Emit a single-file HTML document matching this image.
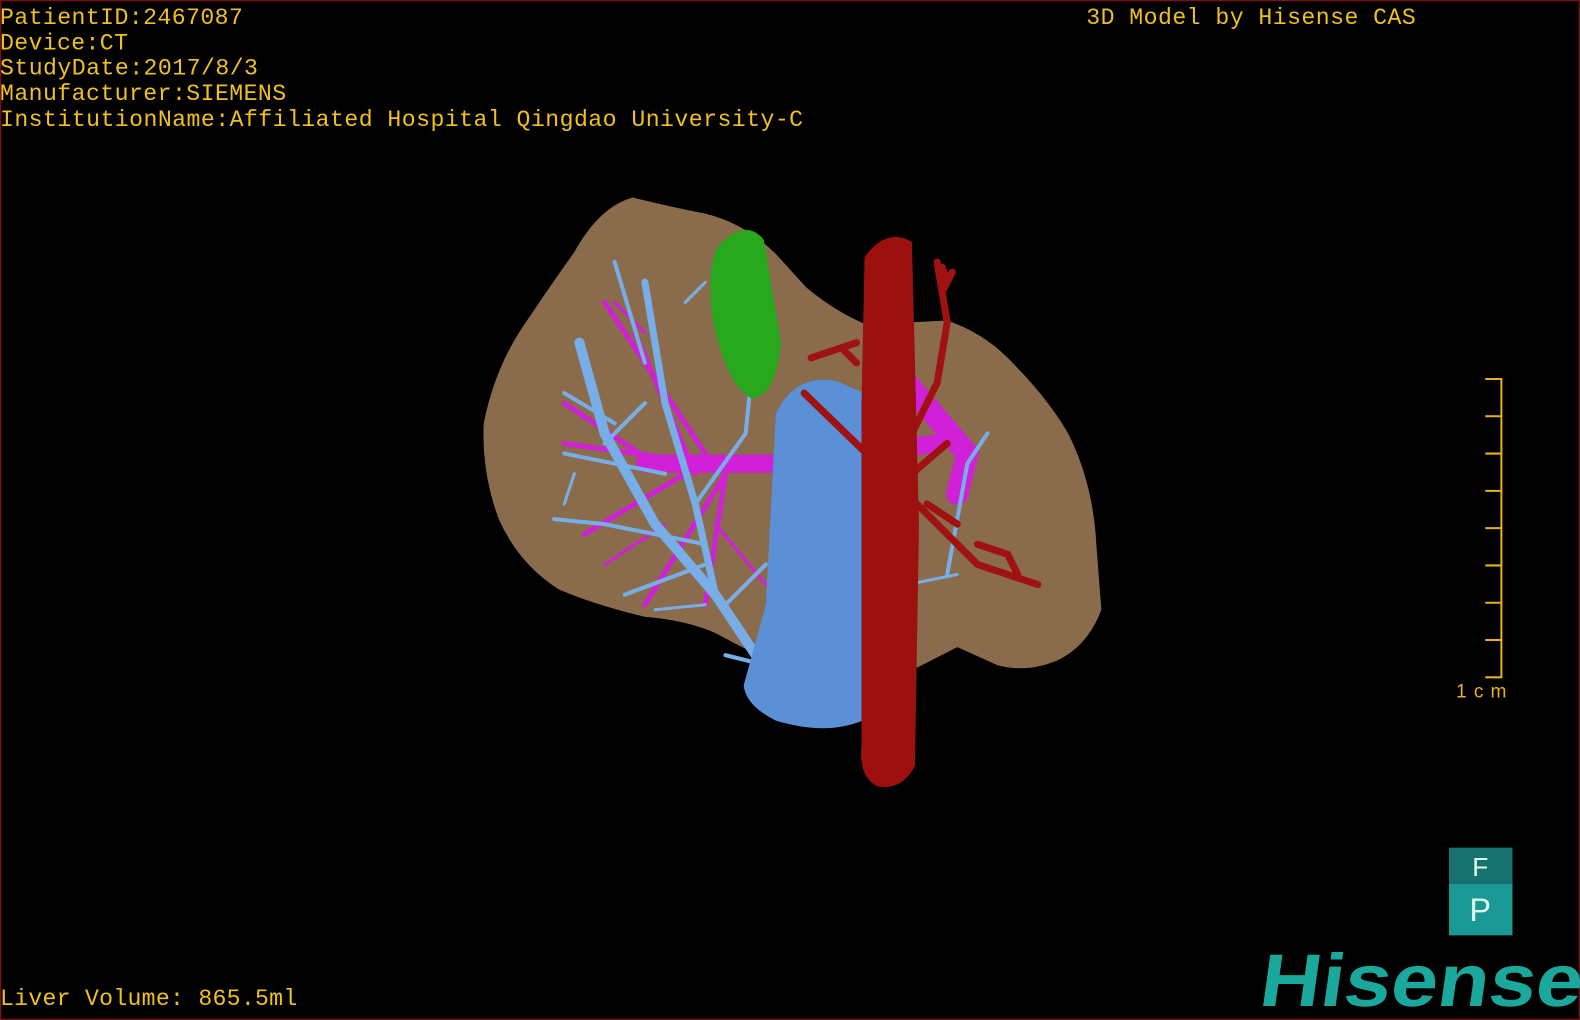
<!DOCTYPE html>
<html><head><meta charset="utf-8"><style>
html,body{margin:0;padding:0;background:#000;width:1580px;height:1020px;overflow:hidden}
svg{display:block}
.t{font-family:"Liberation Mono","DejaVu Sans Mono",monospace;font-size:23px;fill:#f0c020}
</style></head><body>
<svg width="1580" height="1020" viewBox="0 0 1568 1012" preserveAspectRatio="none">
<rect x="0.5" y="0.5" width="1567" height="1011" fill="#000" stroke="#7a1010" stroke-width="1.5"/>
<text class="t" x="0" y="24" textLength="241">PatientID:2467087</text>
<text class="t" x="0" y="49" textLength="127">Device:CT</text>
<text class="t" x="0" y="74" textLength="256">StudyDate:2017/8/3</text>
<text class="t" x="0" y="99" textLength="284">Manufacturer:SIEMENS</text>
<text class="t" x="0" y="125" textLength="797">InstitutionName:Affiliated Hospital Qingdao University-C</text>
<text class="t" x="1078" y="24" textLength="327">3D Model by Hisense CAS</text>
<text class="t" x="0" y="997" textLength="295">Liver Volume: 865.5ml</text>
<!-- liver -->
<path d="M628 196 Q665 205 700 212 Q740 222 770 252 L800 285 Q830 310 860 322 L940 318 Q975 330 1000 355 Q1040 395 1060 430 Q1085 480 1088 540 L1093 605 Q1080 640 1050 655 Q1020 668 990 660 L950 642 L905 665 Q880 690 860 700 L780 662 Q740 645 710 628 Q680 615 640 612 Q590 600 555 585 Q515 560 495 515 Q478 470 480 420 Q490 370 515 330 Q545 285 570 250 Q595 205 628 196 Z" fill="#8a6b4b"/>
<!-- magenta vessels -->
<g stroke="#d020d8" fill="none" stroke-linecap="round">
<path d="M640 460 L770 460 L930 440" stroke-width="18"/>
<path d="M900 380 L960 450 L950 490" stroke-width="22"/>
<path d="M690 470 L630 330 M700 450 L600 300 M720 470 L700 600 M680 470 L580 530 M700 460 L560 440 M720 470 L640 600 M650 460 L560 400" stroke-width="5"/>
<path d="M640 330 L610 300 M660 520 L600 560 M710 520 L760 580" stroke-width="3"/>
</g>
<!-- blue vessels -->
<g stroke="#78aee8" fill="none" stroke-linecap="round">
<path d="M750 650 L710 590 L650 520 L600 430 L575 340" stroke-width="10"/>
<path d="M710 590 L690 500 L660 400 L640 280" stroke-width="7"/>
<path d="M700 540 L600 520 L550 515 M660 470 L560 450 M690 500 L740 430 L745 380 M640 360 L610 260 M700 560 L620 590 M720 600 L760 560 M610 420 L560 390 M600 440 L640 400 M720 650 L760 660 M940 570 L960 460 L980 430" stroke-width="4"/>
<path d="M700 600 L650 605 M680 300 L700 280 M560 500 L570 470 M900 580 L950 570" stroke-width="3"/>
</g>
<!-- gallbladder -->
<path d="M712 245 Q740 215 758 238 L775 340 Q770 395 745 395 Q720 380 708 320 Q700 270 712 245 Z" fill="#28a81c"/>
<!-- IVC -->
<path d="M770 410 Q790 370 830 378 L858 390 L856 715 Q820 730 770 715 Q740 700 738 680 L760 600 Z" fill="#5b8fd6"/>
<!-- aorta branches -->
<g stroke="#a01212" fill="none" stroke-linecap="round">
<path d="M798 390 L860 450 M905 470 L940 440 M910 500 L970 560 L1030 580 M930 260 L940 320 L930 380 L905 430 M850 340 L805 355 M920 500 L950 520 M940 280 L935 265 M970 540 L1000 550 L1010 570 M935 290 L945 270 M850 360 L835 345" stroke-width="7"/>
</g>
<path d="M858 255 Q880 225 905 240 L912 520 L908 760 Q895 785 870 780 Q852 770 855 740 L855 400 Z" fill="#9c1010"/>
<!-- scale bar -->
<g stroke="#e8b020" stroke-width="2" fill="none">
<path d="M1474 376 H1490 V672 H1474"/>
<path d="M1474 413 H1490 M1474 450 H1490 M1474 487 H1490 M1474 524 H1490 M1474 561 H1490 M1474 598 H1490 M1474 635 H1490"/>
</g>
<text x="1445" y="692" textLength="50" font-family="Liberation Sans,sans-serif" font-size="19" fill="#e8b020">1cm</text>
<!-- FP logo -->
<rect x="1438" y="841" width="63" height="36" fill="#16726f"/>
<rect x="1438" y="877" width="63" height="51" fill="#1a9896"/>
<text x="1469" y="869" text-anchor="middle" font-family="Liberation Sans,sans-serif" font-size="26" fill="#dfe">F</text>
<text x="1469" y="914" text-anchor="middle" font-family="Liberation Sans,sans-serif" font-size="32" fill="#dfe">P</text>
<g transform="translate(1240 998) skewX(-8)">
<text x="8" y="0" textLength="320" lengthAdjust="spacingAndGlyphs" font-family="Liberation Sans,sans-serif" font-weight="bold" font-size="74" fill="#1ba89c">Hisense</text>
</g>
</svg>
</body></html>
